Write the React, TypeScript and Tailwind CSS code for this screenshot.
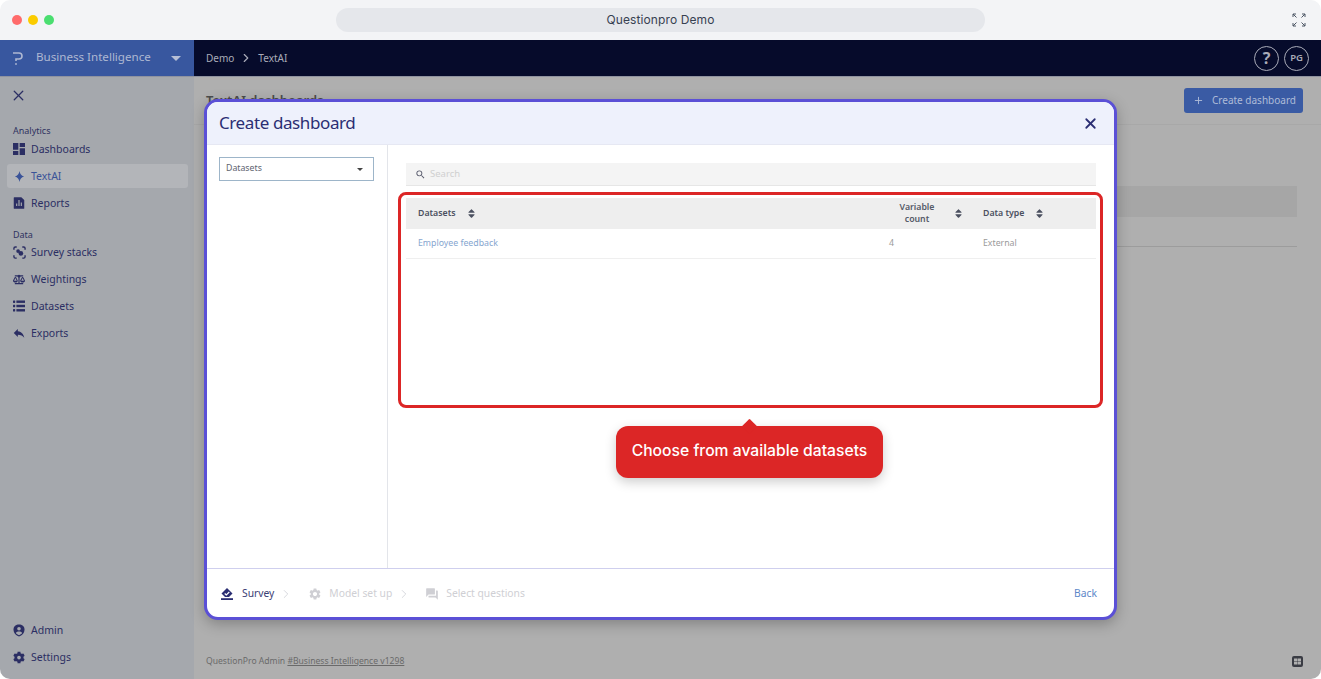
import { FaBalanceScale, FaCog, FaSort, FaThLarge } from 'react-icons/fa';
import { MdDashboard, MdQuestionAnswer, MdReply, MdSearch, MdSettings } from 'react-icons/md';
import { RiFileChartFill } from 'react-icons/ri';
import { ChevronRight, Plus, X } from 'lucide-react';
import type { ReactNode } from 'react';

function NavItem({ icon, label, active }: { icon: ReactNode; label: string; active?: boolean }) {
  return (
    <div className={`ml-[7px] mr-[6px] flex h-[24px] items-center gap-[6px] rounded-[3px] pl-[6px] ${active ? 'bg-[#b3b5b9] text-[#3a5398]' : 'text-[#2b2e63]'}`}>
      <span className="flex w-[12px] items-center justify-center text-[13px]">{icon}</span>
      <span className="text-[10.500px] leading-none">{label}</span>
    </div>
  );
}

function StacksIcon() {
  return (
    <svg viewBox="0 0 14 14" className="h-[13px] w-[13px] shrink-0" fill="none" stroke="currentColor" strokeWidth="1.500">
      <path d="M1 4V2.500A1.500 1.500 0 0 1 2.500 1H4M10 1h1.500A1.500 1.500 0 0 1 13 2.500V4M13 10v1.500a1.500 1.500 0 0 1-1.500 1.500H10M4 13H2.500A1.500 1.500 0 0 1 1 11.500V10" />
      <circle cx="5.500" cy="5.500" r="2" fill="currentColor" stroke="none" />
      <circle cx="8.500" cy="8" r="2.500" fill="currentColor" stroke="none" />
    </svg>
  );
}

function SparkIcon() {
  return (
    <svg viewBox="0 0 12 12" className="h-[11px] w-[11px]" fill="currentColor">
      <path d="M6 0C6.500 3.500 8 5 11 6 8 7 6.500 8.500 6 12 5.500 8.500 4 7 1 6 4 5 5.500 3.500 6 0Z" />
    </svg>
  );
}

function ListIcon() {
  return (
    <svg viewBox="0 0 12 12" className="h-[12px] w-[12px] shrink-0" fill="currentColor">
      <rect x="0" y="0.500" width="2.200" height="2.400" rx="0.600" />
      <rect x="3.400" y="0.500" width="8.600" height="2.400" />
      <rect x="0" y="4.800" width="2.200" height="2.400" rx="0.600" />
      <rect x="3.400" y="4.800" width="8.600" height="2.400" />
      <rect x="0" y="9.100" width="2.200" height="2.400" rx="0.600" />
      <rect x="3.400" y="9.100" width="8.600" height="2.400" />
    </svg>
  );
}

function AdminIcon() {
  return (
    <svg viewBox="0 0 12 13" className="h-[13px] w-[12px] shrink-0">
      <path d="M6 0.500C9 0.500 11.500 2 11.500 5.500 11.500 9 9 11.500 6 12.500 3 11.500 0.500 9 0.500 5.500 0.500 2 3 0.500 6 0.500Z" fill="currentColor" />
      <circle cx="6" cy="4.800" r="1.800" fill="#a5a8ad" />
      <path d="M2.800 9C3.500 7.800 4.700 7.400 6 7.400 7.300 7.400 8.500 7.800 9.200 9 8.500 10 7.300 10.800 6 11.200 4.700 10.800 3.500 10 2.800 9Z" fill="#a5a8ad" />
    </svg>
  );
}

function SurveyIcon() {
  return (
    <svg viewBox="0 0 14 14" className="h-[14px] w-[14px] shrink-0">
      <path d="M7 1 12.500 6.500 9 10H5L1.500 6.500Z" fill="#2b2e73" />
      <path d="M4.700 6.500 6.300 8 9.300 5" fill="none" stroke="#fff" strokeWidth="1.200" />
      <rect x="1" y="11.200" width="12" height="1.800" fill="#2b2e73" />
    </svg>
  );
}

function Sort() {
  return <FaSort className="text-[11px] text-[#4b5060]" />;
}

function StepDivider() {
  return <ChevronRight className="h-[14px] w-[14px] text-[#c9cbd2]" strokeWidth={1.25} />;
}

export default function App() {
  return (
    <div className="relative h-[679px] w-[1321px] overflow-hidden bg-white font-['Noto_Sans',sans-serif]">
      <div className="flex h-full flex-col overflow-hidden rounded-[10px]">
        {/* Browser bar */}
        <div className="flex h-[40px] shrink-0 items-center bg-[#f3f4f6] pl-[12px] pr-[15px]">
          <div className="flex w-[324px] gap-[6px]">
            <span className="h-[10px] w-[10px] rounded-full bg-[#ff6b6b]" />
            <span className="h-[10px] w-[10px] rounded-full bg-[#fbcc00]" />
            <span className="h-[10px] w-[10px] rounded-full bg-[#4ade70]" />
          </div>
          <div className="flex h-[24px] w-[649px] items-center justify-center rounded-full bg-[#e5e7eb] font-['Inter',sans-serif] text-[12px] tracking-[0.1px] text-[#374151]">
            Questionpro Demo
          </div>
          <div className="ml-auto">
            <svg viewBox="0 0 14 14" className="h-[14px] w-[14px]" fill="none" stroke="#4b5563" strokeWidth="1">
              <path d="M1 4V1h3M1 1l3.500 3.500M10 1h3v3M13 1 9.500 4.500M1 10v3h3M1 13l3.500-3.500M13 10v3h-3M13 13 9.500 9.500" />
            </svg>
          </div>
        </div>

        {/* App top bar */}
        <div className="flex h-[37px] shrink-0 border-b border-[#8f93a0]">
          <div className="flex w-[194px] items-center bg-[#38579f] pl-[13px] pr-[13px] text-[#aeb8d2]">
            <svg viewBox="0 0 10 13" className="h-[13px] w-[10px]" fill="none" stroke="currentColor" strokeWidth="1.600">
              <path d="M0 1h6a2.800 2.800 0 0 1 0 6H3v2" />
              <circle cx="3" cy="12" r="0.900" fill="currentColor" stroke="none" />
            </svg>
            <span className="ml-[13px] pb-[2px] text-[11.600px]">Business Intelligence</span>
            <span className="ml-auto h-0 w-0 border-x-[5px] border-t-[5px] border-x-transparent border-t-[#b6bfd6]" />
          </div>
          <div className="flex flex-1 items-center bg-[#060b2b] pl-[12px] pr-[12px] text-[10px] text-[#a9abb8]">
            <span>Demo</span>
            <ChevronRight className="mx-[5px] h-[14px] w-[14px]" strokeWidth={2} />
            <span>TextAI</span>
            <div className="ml-auto flex items-center gap-[5px]">
              <span className="flex h-[25px] w-[25px] items-center justify-center rounded-full border border-[#a9abb8] text-[16px] font-bold">?</span>
              <span className="flex h-[25px] w-[25px] items-center justify-center rounded-full border border-[#a9abb8] text-[9.500px] font-semibold">PG</span>
            </div>
          </div>
        </div>

        <div className="flex min-h-0 flex-1">
          {/* Sidebar */}
          <aside className="flex w-[194px] shrink-0 flex-col bg-[#a5a8ad] pb-[10px]">
            <div className="flex h-[36px] items-center pl-[10px] text-[#2b2e63]">
              <X className="h-[17px] w-[17px]" strokeWidth={1.750} />
            </div>
            <div className="mt-[13px] pl-[13px] text-[9px] leading-none text-[#2f3260]">Analytics</div>
            <div className="mt-[2px] flex flex-col gap-[3px]">
              <NavItem icon={<MdDashboard className="shrink-0 text-[16px]" />} label="Dashboards" />
              <NavItem icon={<SparkIcon />} label="TextAI" active />
              <NavItem icon={<RiFileChartFill className="shrink-0 text-[14px]" />} label="Reports" />
            </div>
            <div className="mt-[15px] pl-[13px] text-[9px] leading-none text-[#2f3260]">Data</div>
            <div className="mt-[1px] flex flex-col gap-[3px]">
              <NavItem icon={<StacksIcon />} label="Survey stacks" />
              <NavItem icon={<FaBalanceScale />} label="Weightings" />
              <NavItem icon={<ListIcon />} label="Datasets" />
              <NavItem icon={<MdReply className="shrink-0 text-[14px]" />} label="Exports" />
            </div>
            <div className="mt-auto flex flex-col gap-[3px]">
              <NavItem icon={<AdminIcon />} label="Admin" />
              <NavItem icon={<FaCog />} label="Settings" />
            </div>
          </aside>

          {/* Dimmed page behind the dialog */}
          <main className="flex min-w-0 flex-1 flex-col bg-[#afafaf]">
            <div className="flex h-[48px] items-center justify-between border-b border-[#a8a8a8] pl-[12px] pr-[18px]">
              <h1 className="text-[13px] font-semibold text-[#4c4c4c]">TextAI dashboards</h1>
              <button className="flex h-[25px] w-[119px] items-center gap-[8px] rounded-[3px] bg-[#3a5ba4] pl-[9px] text-[10px] text-[#aebbd8]">
                <Plus className="h-[11px] w-[11px]" />
                Create dashboard
              </button>
            </div>
            <div className="ml-[12px] mr-[24px] mt-[61px] h-[31px] bg-[#a6a6a6]" />
            <div className="ml-[12px] mr-[24px] h-[30px] border-b border-[#9c9c9c]" />
            <div className="mt-auto flex h-[36px] items-center pl-[12px] pr-[18px] text-[8.600px] text-[#6a6a6a]">
              <span>QuestionPro Admin&nbsp;</span>
              <span className="underline">#Business Intelligence v1298</span>
              <span className="ml-auto flex h-[11px] w-[11px] items-center justify-center rounded-[2px] bg-[#3a3c44] text-[7px] text-[#afafaf]">
                <FaThLarge />
              </span>
            </div>
          </main>
        </div>
      </div>

      {/* Dialog */}
      <div className="absolute left-[204px] top-[99px] flex h-[521px] w-[913px] flex-col overflow-hidden rounded-[14px] border-[3px] border-[#5b50d6] bg-white shadow-[0_4px_14px_rgba(0,0,0,0.25)]">
        <div className="flex h-[43px] shrink-0 items-center justify-between border-b border-[#e6e8f3] bg-[#eef1fc] pl-[12px] pr-[15px] text-[#2b2e73]">
          <h2 className="pb-[2px] text-[17px] leading-none tracking-[-0.4px]">Create dashboard</h2>
          <X className="h-[17px] w-[17px]" strokeWidth={2.5} />
        </div>
        <div className="flex min-h-0 flex-1">
          <div className="w-[181px] shrink-0 border-r border-[#e3e5ea] pl-[12px] pr-[13px] pt-[12px]">
            <div className="flex h-[24px] items-center justify-between border border-[#9db5c9] pl-[6px] pr-[10px] text-[8.750px] text-[#5e6470]">
              Datasets
              <span className="h-0 w-0 border-x-[3px] border-t-[3px] border-x-transparent border-t-[#444]" />
            </div>
          </div>
          <div className="min-w-0 flex-1 pl-[18px] pr-[18px] pt-[18px]">
            <div className="flex h-[23px] items-center gap-[4px] border-b border-[#e6e6e6] bg-[#f4f4f4] pl-[9px] text-[9.500px] text-[#d0d0d0]">
              <MdSearch className="text-[11px] text-[#55586a]" />
              Search
            </div>
            <div className="mt-[12px] grid grid-cols-[471px_94px_1fr]">
              <div className="flex h-[31px] items-center gap-[10px] bg-[#eeeeee] pl-[12px] text-[8.750px] font-semibold text-[#4b5060]">
                Datasets <Sort />
              </div>
              <div className="flex h-[31px] items-center bg-[#eeeeee] pl-[12px] text-[8.750px] font-semibold text-[#555a68]">
                <span className="w-[56px] text-center leading-[11.500px]">Variable count</span>
                <span className="ml-[8px]"><Sort /></span>
              </div>
              <div className="flex h-[31px] items-center gap-[10px] bg-[#eeeeee] pl-[12px] text-[8.750px] font-semibold text-[#4b5060]">
                Data type <Sort />
              </div>
              <div className="flex h-[30px] items-center border-b border-[#efefef] pl-[12px] text-[8.750px] text-[#86a6cf]">Employee feedback</div>
              <div className="flex h-[30px] items-center border-b border-[#efefef] pl-[12px] text-[8.750px] text-[#9a9a9a]">4</div>
              <div className="flex h-[30px] items-center border-b border-[#efefef] pl-[12px] text-[8.750px] text-[#9a9a9a]">External</div>
            </div>
          </div>
        </div>
        <div className="flex h-[49px] shrink-0 items-center border-t border-[#cfcfee] pl-[13px] pr-[17px] pt-[1px] text-[10.300px] text-[#cfcfd4]">
          <SurveyIcon />
          <span className="ml-[8px] text-[#3b3e74]">Survey</span>
          <span className="ml-[5px]"><StepDivider /></span>
          <MdSettings className="ml-[15px] text-[14px]" />
          <span className="ml-[7px]">Model set up</span>
          <span className="ml-[5px]"><StepDivider /></span>
          <MdQuestionAnswer className="ml-[14px] text-[14px]" />
          <span className="ml-[7px]">Select questions</span>
          <span className="ml-auto text-[#5d87c8]">Back</span>
        </div>
      </div>

      {/* Tour highlight */}
      <div className="absolute left-[398px] top-[192px] h-[216px] w-[705px] rounded-[8px] border-[3px] border-[#dc2626]" />
      <div className="absolute left-[616px] top-[426px] flex h-[52px] w-[267px] items-center justify-center rounded-[12px] bg-[#dc2626] pb-[3px] font-['Inter',sans-serif] text-[15.700px] font-medium text-white shadow-[0_4px_12px_rgba(0,0,0,0.2)]">
        <span className="absolute -top-[5px] left-[128px] h-[11px] w-[11px] rotate-45 rounded-[1px] bg-[#dc2626]" />
        <span className="relative">Choose from available datasets</span>
      </div>
    </div>
  );
}
